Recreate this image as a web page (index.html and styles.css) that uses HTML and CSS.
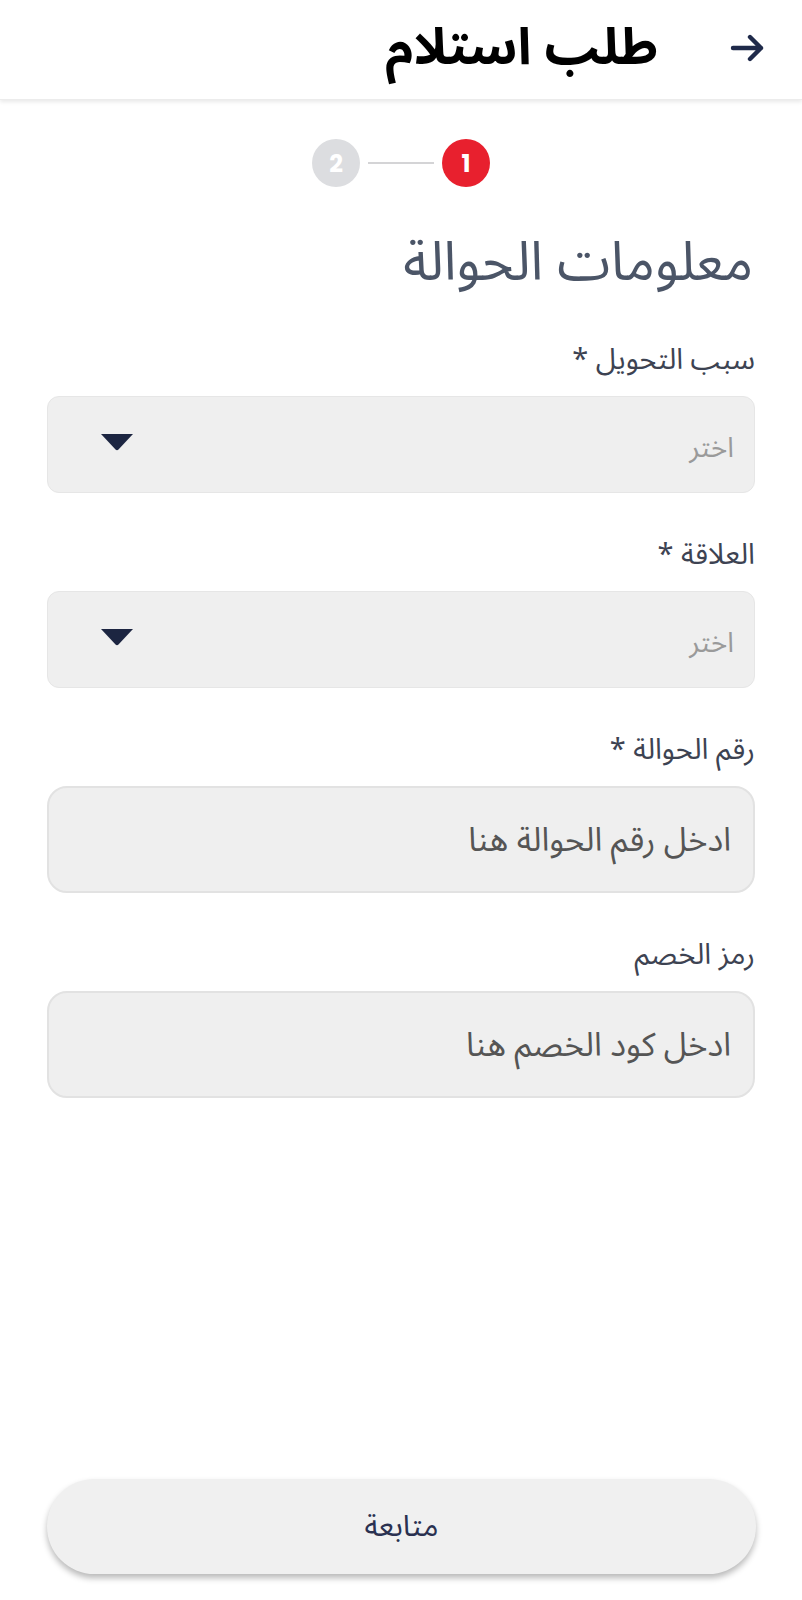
FILE: index.html
```html
<!DOCTYPE html>
<html lang="ar" dir="rtl">
<head>
<meta charset="utf-8">
<title>طلب استلام</title>
<link rel="stylesheet" href="styles.css">
</head>
<body>
<div class="app">
  <header class="topbar">
    <button class="back" aria-label="رجوع">
      <svg width="36" height="30" viewBox="0 0 36 30"><path d="M3 15H31M20 4L31 15L20 26" fill="none" stroke="#1f2a4a" stroke-width="4.4" stroke-linecap="round" stroke-linejoin="round"/></svg>
    </button>
    <h1 class="page-title">طلب استلام</h1>
  </header>

  <main class="content">
    <div class="stepper">
      <span class="step active">1</span>
      <span class="step-line"></span>
      <span class="step">2</span>
    </div>

    <h2 class="section-title">معلومات الحوالة</h2>

    <div class="fields">
      <div class="field">
        <label class="label">سبب التحويل *</label>
        <div class="select">
          <span class="select-placeholder">اختر</span>
          <svg class="caret" width="34" height="18" viewBox="0 0 34 18"><path d="M1 1H33L18.5 16.5Q17 18 15.5 16.5Z" fill="#1c2541"/></svg>
        </div>
      </div>

      <div class="field">
        <label class="label">العلاقة *</label>
        <div class="select">
          <span class="select-placeholder">اختر</span>
          <svg class="caret" width="34" height="18" viewBox="0 0 34 18"><path d="M1 1H33L18.5 16.5Q17 18 15.5 16.5Z" fill="#1c2541"/></svg>
        </div>
      </div>

      <div class="field">
        <label class="label">رقم الحوالة *</label>
        <div class="input"><span class="input-placeholder">ادخل رقم الحوالة هنا</span></div>
      </div>

      <div class="field">
        <label class="label">رمز الخصم</label>
        <div class="input"><span class="input-placeholder">ادخل كود الخصم هنا</span></div>
      </div>
    </div>
  </main>

  <footer class="footer">
    <button class="continue">متابعة</button>
  </footer>
</div>
</body>
</html>
```

FILE: styles.css
```css
* { box-sizing: border-box; }
html, body { margin: 0; padding: 0; background: #ffffff; }
body {
  font-family: "Noto Sans Arabic", "DejaVu Sans", "Noto Sans", sans-serif;
  color: #3d4352;
}
.app {
  min-height: 1600px;
  display: flex;
  flex-direction: column;
}
.topbar {
  height: 100px;
  display: flex;
  align-items: center;
  padding: 0 36px 4px 0;
  background: #fff;
  box-shadow: 0 2px 4px rgba(0,0,0,0.09);
  border-bottom: 1px solid #ececec;
}
.back {
  width: 36px;
  height: 30px;
  padding: 0;
  border: 0;
  background: none;
  display: flex;
  flex-shrink: 0;
}
.page-title {
  margin: 0 70px 0 0;
  padding: 0 2px 0 12px;
  font-size: 51px;
  font-weight: 700;
  color: #000;
  line-height: 80px;
  white-space: nowrap;
}
.content {
  padding: 0 47px;
  display: flex;
  flex-direction: column;
}
.stepper {
  margin-top: 39px;
  display: flex;
  justify-content: center;
  align-items: center;
  gap: 8px;
}
.step {
  width: 48px;
  height: 48px;
  border-radius: 50%;
  background: #dcdde0;
  color: #fff;
  font-family: "Poppins", "Inter", "Noto Sans", sans-serif;
  font-weight: 700;
  font-size: 24px;
  display: flex;
  align-items: center;
  justify-content: center;
}
.step.active { background: #e8202e; }
.step-line {
  width: 66px;
  height: 2px;
  background: #d4d4d6;
}
.section-title {
  margin: 46px 2px 0 0;
  font-size: 54px;
  font-weight: 400;
  line-height: 60px;
  color: #4b5567;
}
.fields {
  margin-top: 49px;
  display: flex;
  flex-direction: column;
  gap: 44px;
}
.field {
  display: flex;
  flex-direction: column;
}
.label {
  font-size: 29px;
  line-height: 36px;
  margin-bottom: 18px;
  color: #3d4352;
}
.select {
  height: 97px;
  border-radius: 12px;
  background: #efefef;
  border: 1px solid #e6e6e6;
  display: flex;
  align-items: center;
  justify-content: space-between;
  padding: 0 20px 0 52px;
}
.select-placeholder {
  font-size: 28px;
  color: #9a9a9a;
  margin-top: 8px;
}
.caret { display: block; margin-bottom: 6px; }
.input {
  height: 107px;
  border-radius: 20px;
  background: #efefef;
  border: 2px solid #e2e2e2;
  display: flex;
  align-items: center;
  padding: 0 22px;
}
.input-placeholder {
  font-size: 33px;
  color: #555;
  margin-top: 2px;
}
.footer {
  margin-top: auto;
  padding: 0 46px 26px 47px;
}
.continue {
  width: 100%;
  height: 95px;
  border: 0;
  border-radius: 48px;
  background: #f0f0f0;
  box-shadow: 0 4px 6px rgba(0,0,0,0.28);
  font-family: inherit;
  font-size: 30px;
  color: #2a3150;
}
```
